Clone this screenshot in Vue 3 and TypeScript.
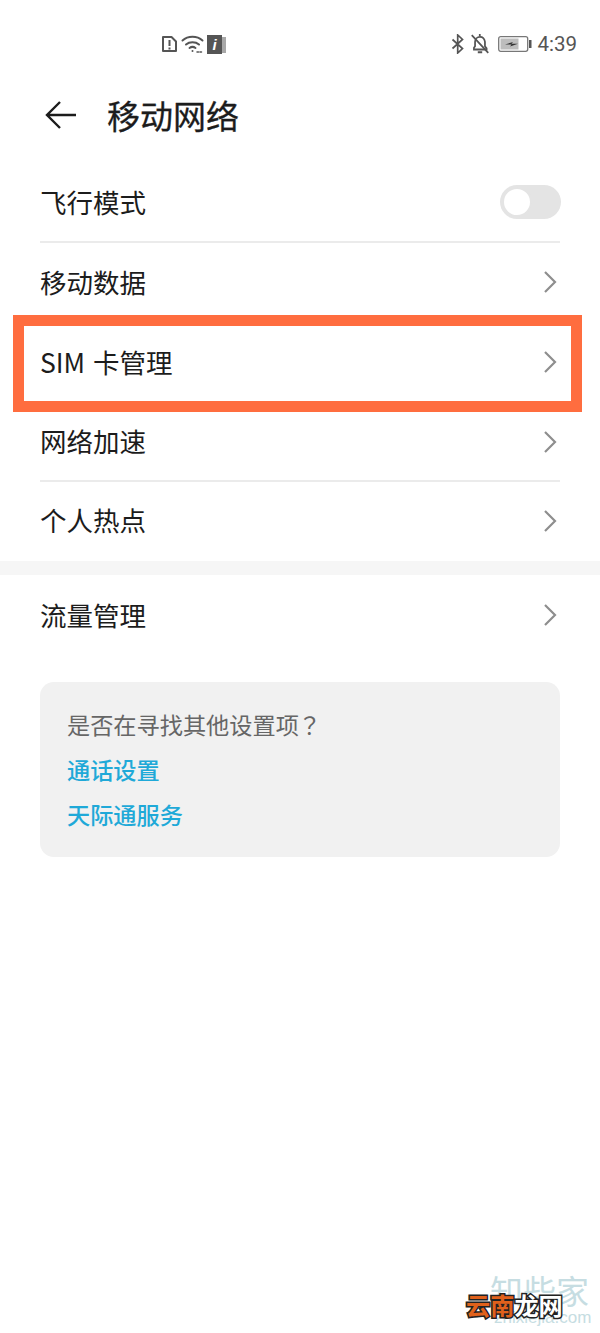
<script setup lang="ts">
const firstGroup = ['移动数据', 'SIM 卡管理', '网络加速', '个人热点']
</script>

<template>
  <div class="page">
    <div class="status">
      <div class="status-left">
        <svg width="17" height="18" viewBox="0 0 17 18" fill="none" stroke="#555" stroke-width="2">
          <path d="M2 2h8.500L15 6.500V16H2z" stroke-linejoin="round" />
          <path d="M8.500 5v6M8.500 12.500v2" />
        </svg>
        <svg class="wifi" width="24" height="20" viewBox="0 0 24 20" fill="none" stroke="#555" stroke-width="2" stroke-linecap="round">
          <path d="M1.500 6.500C7 1.500 16 1.500 21.500 6.500" />
          <path d="M5 10.500c3.500-3 9.500-3 13 0" />
          <path d="M8.500 14c2-1.500 4-1.500 6 0" />
          <circle cx="11.500" cy="17" r="1" fill="#555" stroke="none" />
          <path d="M16 18h6" stroke-width="1.500" stroke-dasharray="1.500 1.500" />
        </svg>
        <div class="sim-info">
          <span class="sim-back"></span>
          <span class="sim-front">i</span>
        </div>
      </div>
      <div class="status-right">
        <svg width="14" height="20" viewBox="0 0 14 20" fill="none" stroke="#555" stroke-width="1.700">
          <path d="M1.500 5.500l10 9-4.800 4.500V1l4.800 4.500-10 9" />
        </svg>
        <svg class="bell" width="20" height="22" viewBox="0 0 18 20" fill="none" stroke="#555" stroke-width="1.600">
          <path d="M3.500 15v-1.500l1-1.500V8c0-2.500 2-4.500 4.500-4.500S13 5 13.500 8v4l1.500 2v1z" />
          <path d="M7 17.500h4M8.800 1v2M1.500 2l15 16" />
        </svg>
        <svg class="battery" width="34" height="16" viewBox="0 0 34 16">
          <rect x="0.700" y="0.700" width="29" height="14.600" rx="2" fill="#fff" stroke="#777" stroke-width="1.300" />
          <rect x="2.500" y="2.500" width="18" height="11" fill="#bdbdbd" />
          <path d="M7 8.500l8-2.500-1.500 1.800H20l-8 2.700 1.500-2z" fill="#333" />
          <rect x="31" y="4" width="2.500" height="8" fill="#555" />
        </svg>
        <span class="time">4:39</span>
      </div>
    </div>

    <div class="header">
      <svg width="32" height="32" viewBox="0 0 32 32" fill="none" stroke="#1c1c1c" stroke-width="2.400">
        <path d="M16 3L3 16l13 13M3 16h29" />
      </svg>
      <h1 class="title">移动网络</h1>
    </div>

    <div class="list top">
      <div class="row">
        <span>飞行模式</span>
        <div class="switch"><span class="knob"></span></div>
      </div>
      <div
        v-for="(item, index) in firstGroup"
        :key="item"
        class="row"
        :class="{ plain: index === 1 || index === 3, short: index === 3, tight: index === 2 }"
      >
        <span>{{ item }}</span>
        <svg class="chevron" width="14" height="24" viewBox="0 0 14 24" fill="none" stroke="#8e8e8e" stroke-width="2.200">
          <path d="M2 2l10 10L2 22" />
        </svg>
      </div>
    </div>

    <div class="band"></div>

    <div class="list">
      <div class="row plain last">
        <span>流量管理</span>
        <svg class="chevron" width="14" height="24" viewBox="0 0 14 24" fill="none" stroke="#8e8e8e" stroke-width="2.200">
          <path d="M2 2l10 10L2 22" />
        </svg>
      </div>
    </div>

    <div class="card">
      <p class="hint">是否在寻找其他设置项<span class="mark">？</span></p>
      <a class="link">通话设置</a>
      <a class="link">天际通服务</a>
    </div>

    <div class="highlight"></div>

    <div class="mark-back">
      <span class="mark-cn">知些家</span>
      <span class="mark-en">zhixiejia.com</span>
    </div>
    <div class="mark-front"><span class="orange">云南</span><span class="white">龙网</span></div>
  </div>
</template>

<style>
html,
body {
  margin: 0;
  background: #fff;
}
</style>

<style scoped>
.page {
  position: relative;
  width: 600px;
  height: 1333px;
  overflow: hidden;
  background: #fff;
  color: #1c1c1c;
  font-family: 'Noto Sans CJK SC', 'Noto Sans', sans-serif;
}
.status {
  height: 88px;
  display: flex;
  align-items: center;
  justify-content: space-between;
  box-sizing: border-box;
  padding: 0 23px 0 161px;
}
.status-left,
.status-right {
  display: flex;
  align-items: center;
}
.wifi {
  margin-left: 3px;
}
.sim-info {
  position: relative;
  width: 19px;
  height: 19px;
  margin-left: 2px;
}
.sim-back {
  position: absolute;
  right: 0;
  top: 2px;
  width: 6px;
  height: 16px;
  background: #a8a8a8;
}
.sim-front {
  position: absolute;
  left: 0;
  top: 0;
  width: 15px;
  height: 19px;
  background: #555;
  color: #fff;
  font: italic bold 15px/19px 'Liberation Sans', sans-serif;
  text-align: center;
}
.bell {
  margin-left: 5px;
}
.battery {
  margin-left: 8px;
}
.time {
  margin-left: 5px;
  font: 20.500px 'Roboto', sans-serif;
  color: #555;
}
.header {
  height: 54px;
  display: flex;
  align-items: center;
  padding: 0 0 0 44px;
}
.title {
  margin: 0 0 0 31px;
  font-size: 33px;
  font-weight: 400;
  -webkit-text-stroke: 0.300px #1c1c1c;
  line-height: 1;
}
.list {
  padding: 0 40px;
}
.top {
  margin-top: 21px;
}
.row {
  height: 80px;
  display: flex;
  align-items: center;
  justify-content: space-between;
  box-sizing: border-box;
  border-bottom: 2px solid #ebebeb;
  font-size: 26.500px;
  line-height: 1;
  word-spacing: 2px;
}
.row.plain {
  border-bottom-color: transparent;
}
.row.tight {
  height: 79px;
}
.row.short {
  height: 79px;
}
.row.last {
  height: 82px;
}
.chevron {
  margin-right: 3px;
}
.switch {
  position: relative;
  width: 61px;
  height: 34px;
  margin-right: -1px;
  border-radius: 17px;
  background: #e4e4e4;
}
.knob {
  position: absolute;
  left: 2px;
  top: 2px;
  width: 26px;
  height: 26px;
  border: 2px solid #e4e4e4;
  border-radius: 50%;
  background: #fff;
}
.band {
  height: 14px;
  background: #f6f6f6;
}
.card {
  margin: 25px 40px 0;
  height: 175px;
  box-sizing: border-box;
  padding: 27px 27px 0;
  border-radius: 14px;
  background: #f1f1f1;
  display: flex;
  flex-direction: column;
  align-items: flex-start;
}
.hint {
  margin: 0;
  font-size: 23.200px;
  line-height: 30px;
  color: #666;
}
.mark {
  margin-left: -1px;
  font-family: 'Noto Sans CJK TC', sans-serif;
}
.link {
  margin-top: 15px;
  font-size: 23.200px;
  line-height: 30px;
  font-weight: 500;
  color: #1fa9d8;
}
.highlight {
  position: absolute;
  left: 13px;
  top: 315px;
  width: 569px;
  height: 97px;
  box-sizing: border-box;
  border: 11px solid #ff6d3f;
}
.mark-back {
  position: absolute;
  left: 490px;
  top: 1270px;
  width: 110px;
  display: flex;
  flex-direction: column;
  color: #c6dde2;
}
.mark-cn {
  font-size: 33px;
  line-height: 40px;
}
.mark-en {
  margin-top: -2px;
  padding-left: 4px;
  font: 17px/20px 'Liberation Sans', sans-serif;
  white-space: nowrap;
}
.mark-front {
  position: absolute;
  left: 466px;
  top: 1291px;
  font-size: 24.200px;
  line-height: 28px;
  font-weight: 700;
  white-space: nowrap;
}
.orange {
  color: #e0611c;
  -webkit-text-stroke: 3px #222;
  paint-order: stroke fill;
}
.white {
  color: #fff;
  -webkit-text-stroke: 3px #222;
  paint-order: stroke fill;
}
</style>
